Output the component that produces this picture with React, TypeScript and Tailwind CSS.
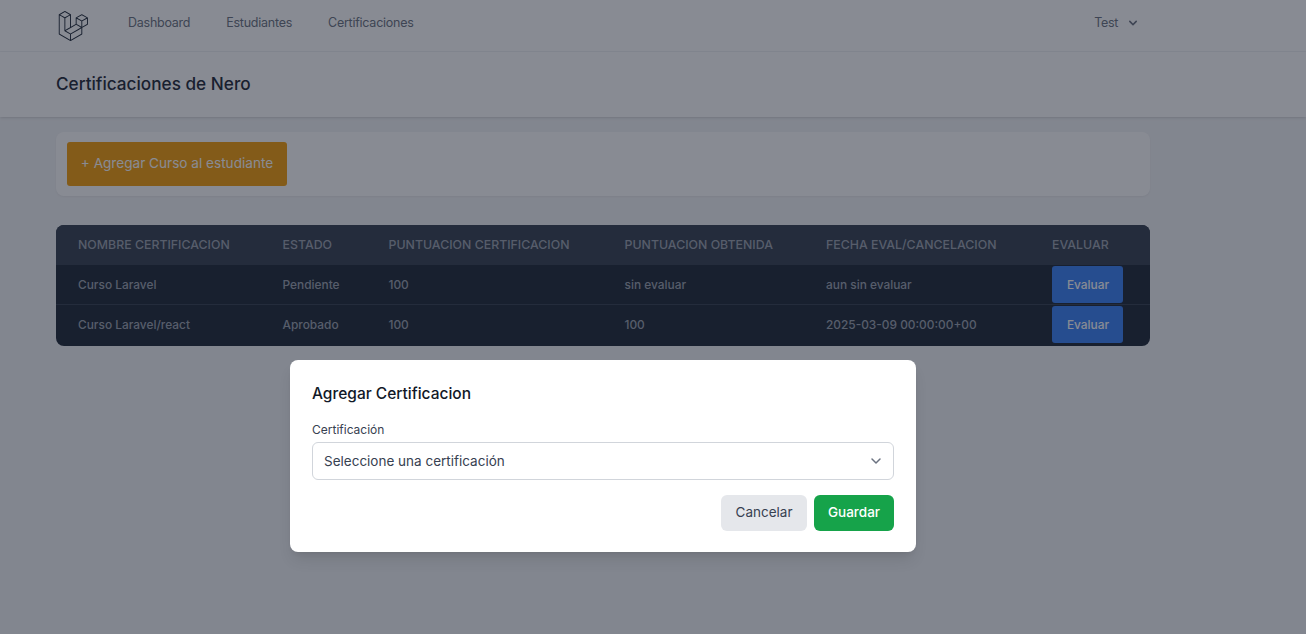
const logo = "M305.8 81.125C305.77 80.995 305.69 80.885 305.65 80.755C305.56 80.525 305.49 80.285 305.37 80.075C305.29 79.935 305.17 79.815 305.07 79.685C304.94 79.515 304.83 79.325 304.68 79.175C304.55 79.045 304.39 78.955 304.25 78.845C304.09 78.715 303.95 78.575 303.77 78.475L251.32 48.275C249.97 47.495 248.31 47.495 246.96 48.275L194.51 78.475C194.33 78.575 194.19 78.725 194.03 78.845C193.89 78.955 193.73 79.045 193.6 79.175C193.45 79.325 193.34 79.515 193.21 79.685C193.11 79.815 192.99 79.935 192.91 80.075C192.79 80.295 192.71 80.535 192.63 80.755C192.58 80.885 192.51 80.995 192.48 81.125C192.38 81.495 192.33 81.875 192.33 82.265V139.625L148.62 164.795V52.575C148.62 52.185 148.57 51.805 148.47 51.435C148.44 51.305 148.36 51.195 148.32 51.065C148.23 50.835 148.16 50.595 148.04 50.385C147.96 50.245 147.84 50.125 147.74 49.995C147.61 49.825 147.5 49.635 147.35 49.485C147.22 49.355 147.06 49.265 146.92 49.155C146.76 49.025 146.62 48.885 146.44 48.785L93.99 18.585C92.64 17.805 90.98 17.805 89.63 18.585L37.18 48.785C37 48.885 36.86 49.035 36.7 49.155C36.56 49.265 36.4 49.355 36.27 49.485C36.12 49.635 36.01 49.825 35.88 49.995C35.78 50.125 35.66 50.245 35.58 50.385C35.46 50.605 35.38 50.845 35.3 51.065C35.25 51.185 35.18 51.305 35.15 51.435C35.05 51.805 35 52.185 35 52.575V232.235C35 233.795 35.84 235.245 37.19 236.025L142.1 296.425C142.33 296.555 142.58 296.635 142.83 296.725C142.95 296.765 143.06 296.835 143.18 296.865C143.55 296.965 143.93 297.015 144.31 297.015C144.69 297.015 145.07 296.965 145.44 296.865C145.55 296.835 145.65 296.775 145.76 296.735C146.02 296.645 146.28 296.565 146.52 296.425L251.43 236.025C252.78 235.245 253.62 233.795 253.62 232.235V174.875L303.87 145.945C305.23 145.165 306.06 143.725 306.06 142.155V82.265C305.95 81.875 305.9 81.495 305.8 81.125ZM144.2 227.205L100.57 202.515L146.39 176.135L196.66 147.195L240.33 172.335L208.29 190.625L144.2 227.205ZM244.75 114.995V164.795L226.39 154.225L201.03 139.625V89.825L219.39 100.395L244.75 114.995ZM249.12 57.105L292.81 82.265L249.12 107.425L205.43 82.265L249.12 57.105ZM114.49 184.425L96.13 194.995V85.305L121.49 70.705L139.85 60.135V169.815L114.49 184.425ZM91.76 27.425L135.45 52.585L91.76 77.745L48.07 52.585L91.76 27.425ZM43.67 60.135L62.03 70.705L87.39 85.305V202.545V202.555V202.565C87.39 202.735 87.44 202.895 87.46 203.055C87.49 203.265 87.49 203.485 87.55 203.695V203.705C87.6 203.875 87.69 204.035 87.76 204.195C87.84 204.375 87.89 204.575 87.99 204.745C87.99 204.745 87.99 204.755 88 204.755C88.09 204.905 88.22 205.035 88.33 205.175C88.45 205.335 88.55 205.495 88.69 205.635L88.7 205.645C88.82 205.765 88.98 205.855 89.12 205.965C89.28 206.085 89.42 206.225 89.59 206.325C89.6 206.325 89.6 206.325 89.61 206.335C89.62 206.335 89.62 206.345 89.63 206.345L139.87 234.775V285.065L43.67 229.705V60.135ZM244.75 229.705L148.58 285.075V234.775L219.8 194.115L244.75 179.875V229.705ZM297.2 139.625L253.49 164.795V114.995L278.85 100.395L297.21 89.825V139.625H297.2Z";

const cols = ["NOMBRE CERTIFICACION", "ESTADO", "PUNTUACION CERTIFICACION", "PUNTUACION OBTENIDA", "FECHA EVAL/CANCELACION", "EVALUAR"];
const rows = [
  ["Curso Laravel", "Pendiente", "100", "sin evaluar", "aun sin evaluar"],
  ["Curso Laravel/react", "Aprobado", "100", "100", "2025-03-09 00:00:00+00"],
];

export default function App() {
  return (
    <div className="relative h-[634px] w-[1306px] overflow-hidden bg-[#f3f4f6] font-['Inter',sans-serif]">
      <nav className="flex h-[52px] items-center border-b border-[#f3f4f6] bg-white pb-[4px] pl-[55px] pr-[165px]">
        <svg viewBox="0 0 316 316" className="h-[34px] w-[34px] translate-y-[2px] fill-[#1f2937]"><path d={logo} /></svg>
        <div className="ml-[39px] flex gap-9 text-[12.5px] tracking-[-0.25px] text-[#6b7280]">
          <span>Dashboard</span>
          <span>Estudiantes</span>
          <span>Certificaciones</span>
        </div>
        <div className="ml-auto flex items-center gap-[7px] text-[12.5px] tracking-[-0.3px] text-[#6b7280]">
          <span>Test</span>
          <svg viewBox="0 0 20 20" className="h-4 w-4 -translate-y-px fill-[#6b7280]"><path fillRule="evenodd" clipRule="evenodd" d="M5.293 7.293a1 1 0 011.414 0L10 10.586l3.293-3.293a1 1 0 111.414 1.414l-4 4a1 1 0 01-1.414 0l-4-4a1 1 0 010-1.414z" /></svg>
        </div>
      </nav>
      <header className="flex h-[65px] items-center bg-white pb-[2px] pl-14 shadow-sm">
        <h2 className="text-[17.2px] leading-7 font-medium text-[#1f2937]">Certificaciones de Nero</h2>
      </header>
      <main className="pl-14 pr-[156px] pt-[15px]">
        <div className="flex h-[64px] items-center rounded-lg bg-white pl-[11px] shadow-xs">
          <button className="flex h-[44px] w-[220px] items-center justify-center rounded-[3px] bg-[#f59e0b] pb-px text-[13.6px] text-white">+ Agregar Curso al estudiante</button>
        </div>
        <div className="mt-[29px] h-[121px] w-[1094px] overflow-hidden rounded-lg bg-[#1f2937]">
          <table className="w-[1094px] table-fixed text-left text-[11.9px] font-medium text-[#9ca3af]">
            <colgroup>
              <col className="w-[204.5px]" />
              <col className="w-[106px]" />
              <col className="w-[236px]" />
              <col className="w-[201.5px]" />
              <col className="w-[226px]" />
              <col className="w-[120px]" />
            </colgroup>
            <thead className="bg-[#374151]">
              <tr className="h-10">
                {cols.map((c) => (
                  <th key={c} className="pl-[22px] text-[12.35px] font-medium">{c}</th>
                ))}
              </tr>
            </thead>
            <tbody>
              {rows.map((r, i) => (
                <tr key={r[0]} className={i === 0 ? "h-[39px] border-b border-[#374151]" : "h-10"}>
                  {r.map((v) => (
                    <td key={v + r[0]} className="pl-[22px] pt-[2px]">{v}</td>
                  ))}
                  <td className="pl-[22px]">
                    <button className="flex h-[36.5px] w-[71px] items-center justify-center rounded-[3px] bg-[#3b82f6] pt-px pl-px font-medium text-white">Evaluar</button>
                  </td>
                </tr>
              ))}
            </tbody>
          </table>
        </div>
      </main>
      <div className="absolute inset-0 bg-[#111827]/50 pl-[290px] pt-[360px]">
        <div className="h-[192px] w-[626px] rounded-lg bg-white px-[22px] pt-[22px] shadow-lg">
          <h3 className="text-[15.5px] leading-6 font-medium text-[#111827]">Agregar Certificacion</h3>
          <label className="mt-[15px] block text-[12px] leading-[18px] text-[#374151]">Certificación</label>
          <div className="mt-[3px] flex h-[38px] items-center justify-between rounded-md border border-[#d1d5db] pl-[11px] pr-[7px] text-[13.5px] text-[#374151]">
            <span>Seleccione una certificación</span>
            <svg viewBox="0 0 20 20" fill="none" className="h-5 w-5 stroke-[#6b7280]"><path d="M6 8l4 4 4-4" strokeWidth="1.5" strokeLinecap="round" strokeLinejoin="round" /></svg>
          </div>
          <div className="mt-[15px] flex justify-end gap-[7px] text-[13.5px]">
            <button className="h-9 w-[86px] rounded-md bg-[#e5e7eb] pb-px text-[#374151]">Cancelar</button>
            <button className="h-9 w-20 rounded-md bg-[#16a34a] pb-px font-medium text-white">Guardar</button>
          </div>
        </div>
      </div>
    </div>
  );
}
